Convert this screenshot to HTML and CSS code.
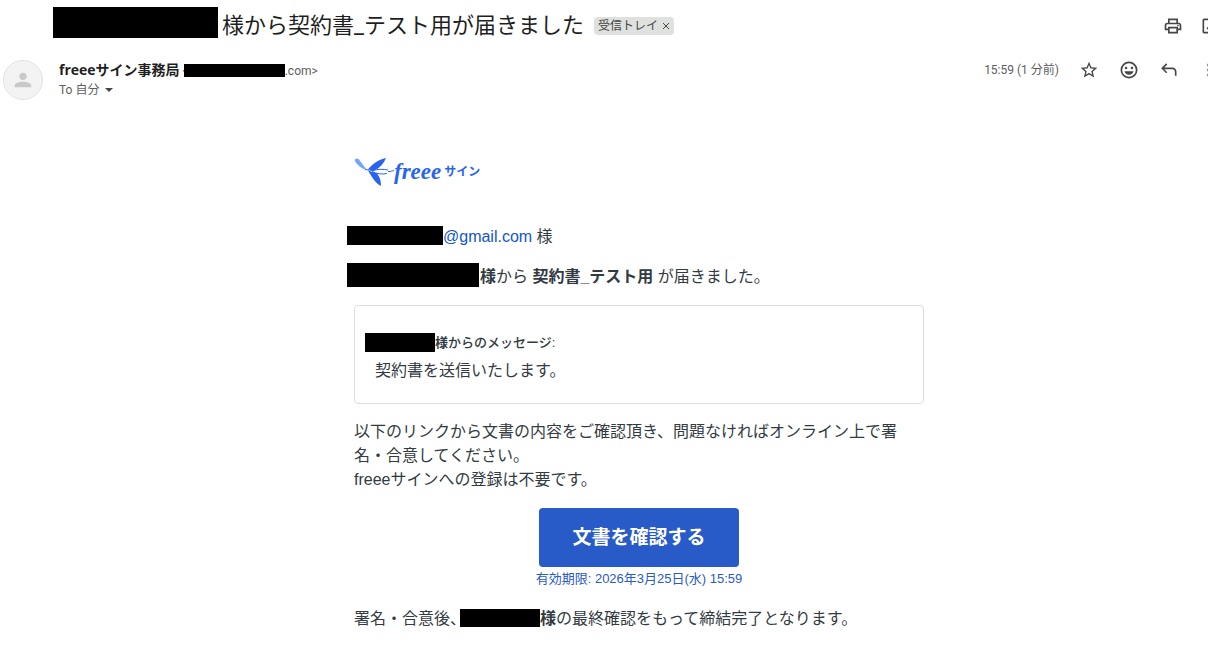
FILE: index.html
```html
<!DOCTYPE html>
<html lang="ja">
<head>
  <meta charset="UTF-8" />
  <title>契約書_テスト用が届きました</title>
  <link rel="stylesheet" href="styles.css">
</head>
<body>

  <header class="subject-bar">
    <h1><span class="redacted subject-name"></span>様から契約書_テスト用が届きました</h1>
    <span class="label">受信トレイ
      <button class="label-close" aria-label="ラベルを削除"><svg viewBox="0 0 8 8"><path d="M1 1l6 6M7 1L1 7" /></svg></button>
    </span>
    <div class="subject-tools">
      <button class="icon" aria-label="印刷">
        <svg viewBox="0 0 24 24"><path fill-rule="evenodd" d="M19 8h-1V3H6v5H5c-1.660 0-3 1.340-3 3v6h4v4h12v-4h4v-6c0-1.660-1.340-3-3-3zM8 5h8v3H8V5zm8 14H8v-4h8v4zm4-4h-2v-2H6v2H4v-4c0-.550.450-1 1-1h14c.550 0 1 .450 1 1v4z" /><circle cx="18" cy="11.500" r="1" /></svg>
      </button>
      <button class="icon" aria-label="新しいウィンドウ">
        <svg viewBox="0 0 24 24"><path d="M19 19H5V5h7V3H5c-1.110 0-2 .900-2 2v14c0 1.100.890 2 2 2h14c1.100 0 2-.900 2-2v-7h-2v7zM14 3v2h3.590l-9.830 9.830 1.410 1.410L19 6.410V10h2V3h-7z" /></svg>
      </button>
    </div>
  </header>

  <section class="sender-bar">
    <div class="avatar">
      <svg viewBox="0 0 24 24"><circle cx="12" cy="8" r="4" /><path d="M3 20v-2c0-2.700 5-4 9-4s9 1.300 9 4v2z" /></svg>
    </div>
    <div class="sender">
      <div class="sender-from"><strong>freeeサイン事務局</strong> <span class="address">&lt;<span class="redacted sender-address"></span>.com&gt;</span></div>
      <button class="sender-to">To 自分 <span class="caret"></span></button>
    </div>
    <div class="sender-tools">
      <time>15:59 (1 分前)</time>
      <button class="icon" aria-label="スター">
        <svg viewBox="0 0 24 24"><path d="M22 9.240l-7.190-.620L12 2 9.190 8.630 2 9.240l5.460 4.730L5.820 21 12 17.270 18.180 21l-1.630-7.030L22 9.240zM12 15.400l-3.760 2.270 1-4.280-3.320-2.880 4.380-.380L12 6.100l1.710 4.040 4.380.380-3.320 2.880 1 4.280L12 15.400z" /></svg>
      </button>
      <button class="icon" aria-label="リアクション">
        <svg viewBox="0 0 24 24"><circle class="ring" cx="12" cy="12" r="9.200" /><circle cx="8.500" cy="9.500" r="1.500" /><circle cx="15.500" cy="9.500" r="1.500" /><path d="M6.500 13.500h11c-.700 2.500-2.900 4.300-5.500 4.300s-4.800-1.800-5.500-4.300z" /></svg>
      </button>
      <button class="icon" aria-label="返信">
        <svg viewBox="0 0 24 24"><path d="M6.300 11l3.700 3.600L8.600 16l-6-6 6-6L10 5.400 6.300 9H16c2.800 0 5 2.200 5 5v5h-2v-5c0-1.700-1.300-3-3-3H6.300z" /></svg>
      </button>
      <button class="icon" aria-label="その他">
        <svg viewBox="0 0 24 24"><circle cx="12" cy="6" r="2" /><circle cx="12" cy="12" r="2" /><circle cx="12" cy="18" r="2" /></svg>
      </button>
    </div>
  </section>

  <main class="mail">
    <div class="logo">
      <svg viewBox="0 0 40 30">
        <path class="wing-light" d="M1 4C0 1.500 3 .500 5 2.500L11 10.500L12.500 12.500C9 13 3 8 1 4z" />
        <path d="M14 12.500C18 7 24 3 32 1C30 6 26 11 20 13.500z" />
        <path d="M14 13.500L23 16.500C26 20 27 24 27 29C21 26 18 20 14 13.500z" />
        <path class="body-line" d="M11 12.500L19 13.500C24 12 29 12 34 13M18 14.500C23 17 28 17.500 33 16.500" />
        <path class="body-line" d="M34 14.500C37 14.500 38 14 40 13.500" />
      </svg>
      <span class="logo-name">freee</span>
      <span class="logo-product">サイン</span>
    </div>

    <p class="addressee"><span class="redacted mail-name"></span><a href="mailto:user@gmail.com">@gmail.com</a> 様</p>
    <p class="arrival"><span class="redacted company"></span><b>様</b>から <b>契約書_テスト用</b> が届きました。</p>

    <div class="message">
      <div class="message-title"><span class="redacted message-name"></span><b>様</b><span class="message-from">からのメッセージ</span>:</div>
      <p>契約書を送信いたします。</p>
    </div>

    <p>以下のリンクから文書の内容をご確認頂き、問題なければオンライン上で署名・合意してください。<br>freeeサインへの登録は不要です。</p>

    <div class="action">
      <a class="button" href="#">文書を確認する</a>
      <div class="expiry">有効期限: 2026年3月25日(水) 15:59</div>
    </div>

    <p>署名・合意後、<span class="redacted final-name"></span><b>様</b>の最終確認をもって締結完了となります。</p>
  </main>

</body>
</html>
```
FILE: styles.css
```css
* {
  box-sizing: border-box;
}

body {
  margin: 0;
  background: #fff;
  color: #333b42;
  font-family: "Liberation Sans", "Noto Sans CJK JP", sans-serif;
  font-size: 16px;
  line-height: 24px;
  overflow-x: hidden;
}

button {
  padding: 0;
  border: none;
  background: none;
  font: inherit;
  color: inherit;
  cursor: pointer;
}

p {
  margin: 0;
}

.redacted {
  display: inline-block;
  background: #000;
  vertical-align: -3px;
}

.icon {
  flex: none;
  width: 20px;
  height: 20px;
}

.icon svg {
  display: block;
  fill: #444746;
}

.icon .ring {
  fill: none;
  stroke: #444746;
  stroke-width: 2;
}

/* subject */
.subject-bar {
  display: flex;
  align-items: center;
  height: 52px;
  padding-left: 53px;
  font-family: Roboto, "Noto Sans CJK JP", sans-serif;
}

.subject-bar h1 {
  display: flex;
  align-items: center;
  gap: 4px;
  margin: 0;
  color: #1f1f1f;
  font-size: 22px;
  font-weight: 400;
  line-height: 28px;
  white-space: nowrap;
}

.subject-name {
  width: 165px;
  height: 31px;
  margin-bottom: 8px;
}

.label {
  display: flex;
  align-items: center;
  gap: 4px;
  height: 18px;
  margin-left: 10px;
  padding: 0 4px;
  border-radius: 4px;
  background: #dfe1de;
  color: #444746;
  font-size: 12px;
  white-space: nowrap;
}

.label-close {
  width: 8px;
  height: 8px;
}

.label-close svg {
  display: block;
  fill: none;
  stroke: #444746;
}

.subject-tools {
  display: flex;
  gap: 17px;
  margin: 0 -12px 0 auto;
}

/* sender */
.sender-bar {
  display: flex;
  align-items: flex-start;
  gap: 16px;
  padding: 8px 0 0 3px;
  color: #5e5e5e;
  font-family: Roboto, "Noto Sans CJK JP", sans-serif;
  font-size: 12px;
  line-height: 20px;
}

.avatar {
  display: flex;
  align-items: center;
  justify-content: center;
  width: 40px;
  height: 40px;
  border: 1px solid #e2e2e2;
  border-radius: 50%;
  background: #f3f3f3;
}

.avatar svg {
  width: 22px;
  fill: #c9c9c9;
}

.sender-from {
  height: 20px;
}

.sender strong {
  color: #1f1f1f;
  font-family: "Open Sans", "Noto Sans CJK JP", sans-serif;
  font-size: 14px;
}

.sender-address {
  width: 101px;
  height: 13px;
  margin-left: -5px;
  vertical-align: -2px;
}

.sender-to {
  display: flex;
  align-items: center;
  gap: 6px;
}

.caret {
  border: 4px solid transparent;
  border-top-color: #444746;
  border-bottom: none;
}

.sender-tools {
  display: flex;
  gap: 20px;
  margin: 0 -11px 0 auto;
}

/* mail body */
.mail {
  box-sizing: content-box;
  max-width: 570px;
  margin: 0 auto;
  padding: 56px 0 24px 70px;
}

.logo {
  display: flex;
  align-items: center;
  height: 32px;
  margin-bottom: 37px;
  color: #2864f0;
  font-weight: 700;
}

.logo svg {
  width: 40px;
  height: 30px;
  fill: #2864f0;
}

.logo .wing-light {
  fill: #73a5ff;
}

.logo .body-line {
  fill: none;
  stroke: #2864f0;
}

.logo-name {
  font-family: "Liberation Serif", serif;
  font-size: 23px;
  font-style: italic;
}

.logo-product {
  margin-left: 3px;
  font-size: 12px;
}

.mail a {
  color: #15c;
  text-decoration: none;
}

.addressee,
.arrival {
  margin-left: -7px;
}

.addressee {
  margin-bottom: 14px;
}

.arrival {
  margin-bottom: 16px;
}

.mail-name {
  width: 96px;
  height: 19px;
}

.company {
  width: 132px;
  height: 24px;
  margin-right: 1px;
  vertical-align: -5px;
}

.message {
  margin-bottom: 16px;
  padding: 25px 10px 20px;
  border: 1px solid #dcdce4;
  border-radius: 4px;
}

.message-title {
  height: 28px;
  font-size: 13px;
}

.message-from {
  font-weight: 500;
}

.message p {
  padding-left: 10px;
}

.message-name {
  width: 70px;
  height: 19px;
  vertical-align: -5px;
}

.action {
  margin: 16px 0;
  text-align: center;
}

.mail .button {
  display: block;
  width: 200px;
  margin: 0 auto;
  padding: 16px 0;
  border-radius: 4px;
  background: #285ac8;
  color: #fff;
  font-size: 19px;
  font-weight: 700;
  line-height: 27px;
}

.expiry {
  color: #285ac8;
  font-size: 13px;
}

/* sits tight against the ideographic comma */
.final-name {
  width: 80px;
  height: 18px;
  margin-left: -6px;
}
```
